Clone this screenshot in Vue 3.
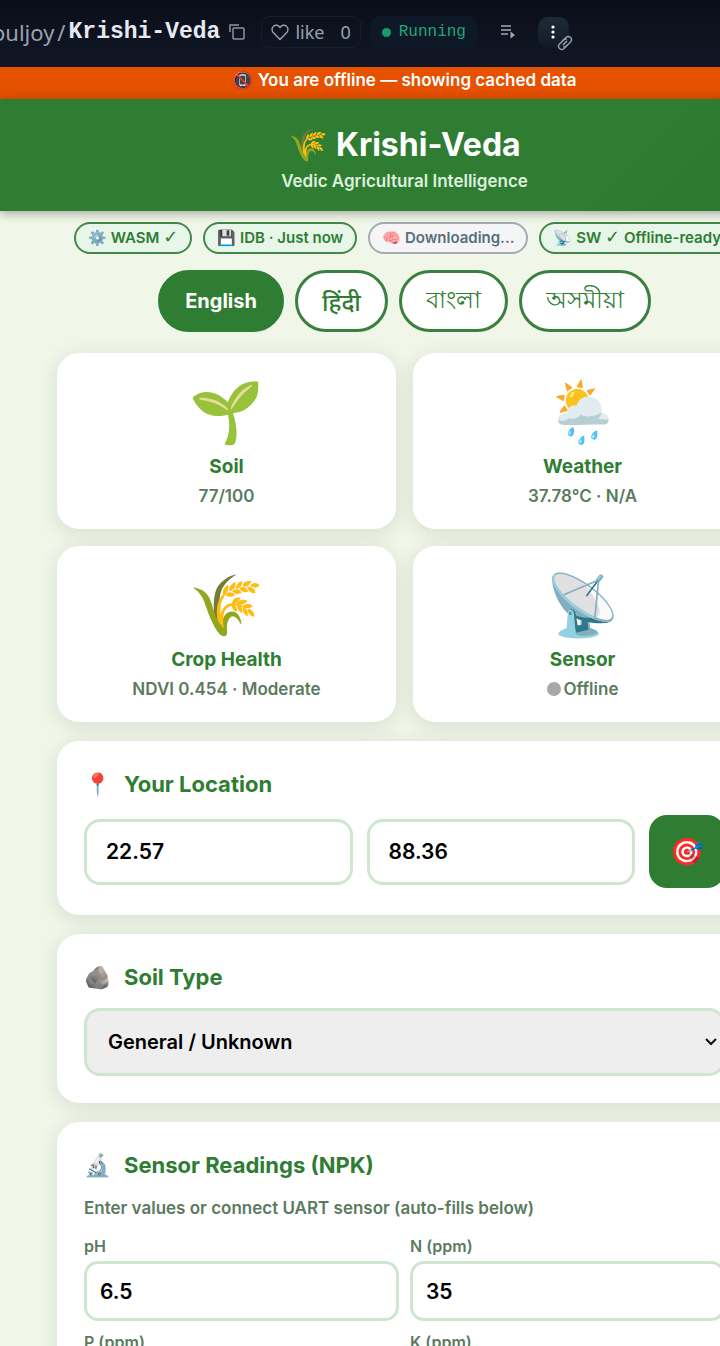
<script setup>
import { ref } from 'vue'

const pills = [
  { icon: '⚙️', text: 'WASM', check: true, tone: 'ok' },
  { icon: '💾', text: 'IDB · Just now', tone: 'ok' },
  { icon: '🧠', text: 'Downloading...', tone: 'idle' },
  { icon: '📡', text: 'SW', check: true, tail: 'Offline-ready', tone: 'ok' }
]
const languages = [
  { code: 'en', label: 'English' },
  { code: 'hi', label: 'हिंदी' },
  { code: 'bn', label: 'বাংলা' },
  { code: 'as', label: 'অসমীয়া' }
]
const language = ref('en')
const tiles = [
  { icon: '🌱', title: 'Soil', value: '77/100' },
  { icon: '🌦️', title: 'Weather', value: '37.78°C · N/A' },
  { icon: '🌾', title: 'Crop Health', value: 'NDVI 0.454 · Moderate' },
  { icon: '📡', title: 'Sensor', value: 'Offline', dot: true }
]
const lat = ref('22.57')
const lon = ref('88.36')
const readings = ref([
  { id: 'ph', label: 'pH', value: '6.5' },
  { id: 'n', label: 'N (ppm)', value: '35' },
  { id: 'p', label: 'P (ppm)', value: '' },
  { id: 'k', label: 'K (ppm)', value: '' }
])
</script>

<template>
  <div class="screen">
    <nav class="topbar">
      <a class="owner" href="#">ouljoy</a><span class="slash">/</span><a class="repo" href="#">Krishi-Veda</a>
      <button class="plain copy" aria-label="Copy name">
        <svg width="16" height="16" viewBox="0 0 16 16" fill="none" stroke="#8b92a3" stroke-width="1.5"><rect x="4" y="4" width="11" height="11" rx="1" /><path d="M1 8V1h9" /></svg>
      </button>
      <button class="like">
        <svg width="18" height="17" viewBox="0 0 18 17" fill="none" stroke="#9aa1b0" stroke-width="1.4" stroke-linejoin="round"><path d="M9 15.5 2.2 8.6C.4 6.6.8 3.6 2.5 2.2 4.5.6 7.2 1 9 3.5 10.8 1 13.5.6 15.5 2.2 17.2 3.6 17.6 6.6 15.8 8.6Z" /></svg>
        <span>like</span><span class="count">0</span>
      </button>
      <span class="status"><i></i>Running</span>
      <button class="plain list" aria-label="Logs">
        <svg width="16" height="16" viewBox="0 0 16 16" fill="none" stroke="#a3a9b6" stroke-width="1.5"><path d="M1 2h10M1 6h10M1 10h7" /><path d="M10.5 7.5v7l4.500-3.500z" fill="#a3a9b6" stroke="none" /></svg>
      </button>
      <button class="more" aria-label="More">
        <svg width="6" height="14" viewBox="0 0 6 14" fill="#fff"><circle cx="3" cy="2" r="1.6" /><circle cx="3" cy="7" r="1.6" /><circle cx="3" cy="12" r="1.6" /></svg>
        <svg class="link" width="16" height="16" viewBox="0 0 16 16" fill="none" stroke="#9aa0aa" stroke-width="1.4" stroke-linecap="round" stroke-linejoin="round"><path d="M6 5.500 9.200 2.300a3.200 3.200 0 0 1 4.500 4.500L9.500 11a3.200 3.200 0 0 1-2.800.9" /><path d="M10 10.500 6.800 13.700a3.200 3.200 0 0 1-4.500-4.500L6.500 5a3.200 3.200 0 0 1 2.800-.9" /><path d="M6.300 9.700 9.700 6.300" /></svg>
      </button>
    </nav>

    <div class="page">
      <div class="banner" role="status">📵 You are offline — showing cached data</div>
      <header class="hero">
        <h1>🌾 Krishi-Veda</h1>
        <p>Vedic Agricultural Intelligence</p>
      </header>
      <div class="pills">
        <span v-for="p in pills" :key="p.text" class="pill" :class="p.tone">{{ p.icon }} {{ p.text }} <span v-if="p.check" class="check">✓</span> {{ p.tail }}</span>
      </div>
      <div class="langs">
        <button v-for="l in languages" :key="l.code" :lang="l.code" :class="{ active: l.code === language }" @click="language = l.code">{{ l.label }}</button>
      </div>
      <main>
        <section class="tiles">
          <article v-for="t in tiles" :key="t.title" class="card tile">
            <span class="big">{{ t.icon }}</span>
            <h2>{{ t.title }}</h2>
            <p><i v-if="t.dot" class="dot"></i>{{ t.value }}</p>
          </article>
        </section>
        <section class="card">
          <h3><span class="glyph">📍</span>Your Location</h3>
          <div class="coords">
            <input v-model="lat" aria-label="Latitude" />
            <input v-model="lon" aria-label="Longitude" />
            <button class="locate" aria-label="Detect location">🎯</button>
          </div>
        </section>
        <section class="card">
          <h3><span class="glyph">🪨</span><label for="soil">Soil Type</label></h3>
          <div class="select">
            <select id="soil"><option>General / Unknown</option></select>
            <svg width="12" height="8" viewBox="0 0 12 8" fill="none" stroke="#111" stroke-width="2"><path d="m1 1 5 5 5-5" /></svg>
          </div>
        </section>
        <section class="card">
          <h3><span class="glyph">🔬</span>Sensor Readings (NPK)</h3>
          <p class="hint">Enter values or connect UART sensor (auto-fills below)</p>
          <div class="fields">
            <div v-for="r in readings" :key="r.id" class="field">
              <label :for="r.id">{{ r.label }}</label>
              <input :id="r.id" v-model="r.value" />
            </div>
          </div>
        </section>
      </main>
    </div>
  </div>
</template>

<style>
body { margin: 0; }
</style>

<style scoped>
* { box-sizing: border-box; }
h1, h2, h3, p { margin: 0; }
button, input, select { font: inherit; color: inherit; margin: 0; }
button { cursor: pointer; }
.screen {
  height: 100vh;
  overflow: hidden;
  background: #f0f6e8;
  font-family: Inter, "Noto Sans", "Liberation Sans", sans-serif;
  font-weight: 600;
}
.topbar {
  display: flex;
  align-items: center;
  height: 67px;
  padding-bottom: 3px;
  background: linear-gradient(#0a0e18, #111726);
  color: #9aa1b0;
  font-family: "Noto Sans", sans-serif;
  font-weight: 400;
  white-space: nowrap;
}
.topbar a { color: inherit; text-decoration: none; }
.owner, .slash { font-size: 22px; }
.owner { margin-left: -8px; }
.slash { margin: 0 3px; }
.topbar .repo { color: #e6e9f2; font: bold 23px/28px "Liberation Mono", monospace; }
.plain { display: flex; padding: 0; border: 0; background: none; }
.copy { margin-left: 9px; }
.like {
  display: flex;
  align-items: center;
  gap: 6px;
  height: 32px;
  margin-left: 16px;
  padding: 0 9px;
  border: 1px solid #171d2b;
  border-radius: 8px;
  background: none;
  font-size: 18px;
}
.count { margin-left: 10px; }
.status {
  display: flex;
  align-items: center;
  gap: 8px;
  height: 32px;
  margin-left: 9px;
  padding: 0 12px;
  border-radius: 10px;
  background: #0f1826;
  color: #1fa67a;
  font: 16px "Liberation Mono", monospace;
}
.status i { width: 9px; height: 9px; border-radius: 50%; background: #159a6c; }
.list { margin-left: 22px; }
.more {
  position: relative;
  display: grid;
  place-items: center;
  width: 31px;
  height: 31px;
  margin-left: 22px;
  padding: 0;
  border: 0;
  border-radius: 10px;
  background: linear-gradient(#1e2a38, #121927);
}
.link { position: absolute; right: -4px; bottom: -3px; }
.page { width: calc(100% + 89px); }
.banner {
  height: 32px;
  background: #e65100;
  color: #fff;
  font-size: 17px;
  line-height: 26px;
  text-align: center;
}
.hero {
  position: relative;
  padding: 26px 0 17px;
  background: linear-gradient(135deg, #2e7d32 75%, #2b762f);
  box-shadow: 0 2px 10px rgba(0, 0, 0, 0.35);
  color: #fff;
  text-align: center;
}
.hero h1 { font-size: 32px; line-height: 40px; }
.hero p { margin-top: 3px; font-size: 17px; line-height: 26px; color: #dff0dd; }
.pills, .langs { display: flex; justify-content: center; gap: 11px; }
.pills { padding-top: 11px; }
.pill {
  height: 32px;
  padding: 0 12px;
  border: 2px solid #43884a;
  border-radius: 16px;
  background: #e8f5e9;
  color: #2e7d32;
  font-size: 15px;
  line-height: 28px;
  white-space: nowrap;
}
.check { font: 400 18px/20px "DejaVu Sans", sans-serif; }
.pill.idle { border-color: #a5abb0; background: #f5f5f7; color: #546e7a; }
.langs { padding-top: 16px; }
.langs button {
  height: 62px;
  padding: 0 24px;
  border: 3px solid #3b803f;
  border-radius: 31px;
  background: #fff;
  color: #2e7d32;
  font-size: 24px;
  font-weight: 500;
}
.langs .active { border-color: #2e7d32; background: #2e7d32; color: #fff; font-size: 20px; font-weight: 700; }
main { display: grid; gap: 19px; padding: 21px 57px; }
.tiles { display: grid; grid-template-columns: 1fr 1fr; gap: 17px; }
.card {
  padding: 27px;
  border-radius: 22px;
  background: #fff;
  box-shadow: 0 4px 20px rgba(40, 60, 30, 0.12);
}
.tile { display: flex; flex-direction: column; align-items: center; height: 176px; padding: 24px 10px 0; }
.big { height: 68px; margin-bottom: 8px; font-size: 60px; line-height: 68px; }
.tile h2 { font-size: 19px; line-height: 28px; color: #2e7d32; }
.tile p { display: flex; align-items: center; gap: 3px; margin-top: 3px; font-size: 17px; line-height: 24px; color: #5b7a60; }
.dot { width: 14px; height: 14px; border-radius: 50%; background: #a8a8a8; }
h3 { display: flex; align-items: center; gap: 13px; margin-bottom: 14px; font-size: 22px; line-height: 33px; color: #2e7d32; }
.glyph { display: flex; justify-content: center; width: 27px; font-size: 22px; }
.coords { display: grid; grid-template-columns: 1fr 1fr 76px; gap: 14px; align-items: center; }
input, select {
  width: 100%;
  border: 3px solid #cde6cf;
  border-radius: 16px;
  background: #fff;
  color: #000;
  font-size: 21px;
}
.coords input { height: 66px; padding: 0 19px; }
.locate { height: 73px; padding: 0; border: 0; border-radius: 18px; background: #2e7d32; font-size: 27px; }
.select { display: grid; align-items: center; position: relative; }
select { height: 68px; padding: 0 21px; background: #eee; font-size: 20px; appearance: none; }
.select svg { position: absolute; right: 8px; }
.hint { margin-bottom: 15px; font-size: 17px; line-height: 24px; color: #5b7a60; }
.fields { display: grid; grid-template-columns: 1fr 1fr; gap: 10px 11px; }
.field label { display: block; margin-bottom: 4px; font-size: 16px; line-height: 22px; color: #5b7a60; }
.field input { height: 60px; padding: 0 13px; border-radius: 14px; }
</style>
